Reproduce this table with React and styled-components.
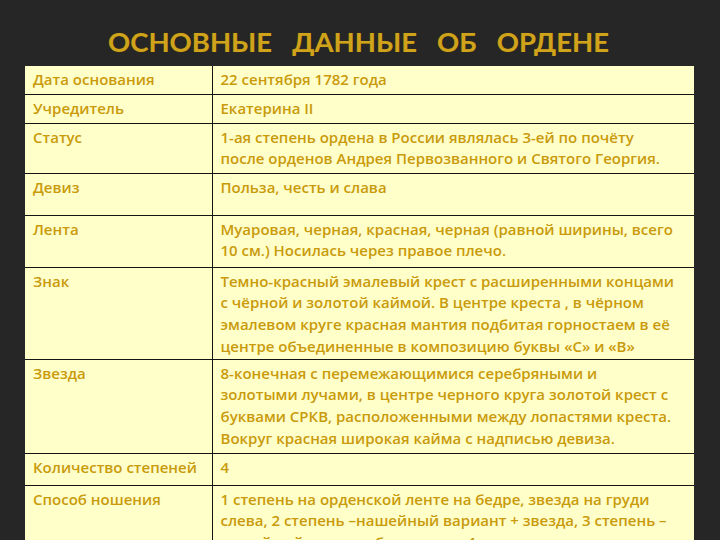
import React from "react";
import styled, { createGlobalStyle } from "styled-components";

const GlobalStyle = createGlobalStyle`
  html, body {
    margin: 0;
    padding: 0;
    background: #252525;
  }
`;

const Page = styled.div`
  width: 720px;
  height: 540px;
  overflow: hidden;
  background: #262626;
  font-family: "Open Sans", Lato, sans-serif;
`;

const Title = styled.h1`
  margin: 0;
  height: 66px;
  display: flex;
  align-items: flex-end;
  justify-content: center;
  padding: 0 3px 8px 0;
  box-sizing: border-box;
  font-family: Lato, "Open Sans", sans-serif;
  font-size: 27.5px;
  font-weight: 700;
  color: #d0a31c;
  white-space: pre;
  text-shadow: 0 0 1px #5a4500;
`;

const Table = styled.table`
  margin-left: 25px;
  width: 669px;
  border-collapse: collapse;
  table-layout: fixed;
  background: #ffffca;
`;

const Row = styled.tr`
  height: ${(p) => p.$h}px;
`;

const Cell = styled.td`
  width: ${(p) => (p.$label ? "187px" : "auto")};
  vertical-align: top;
  padding: 3px 4px 0 8px;
  font-size: 15px;
  font-weight: 600;
  line-height: 21.7px;
  white-space: pre-line;
  color: #c99a0a;
  border-right: ${(p) => (p.$label ? "1.5px solid #151515" : "none")};
  border-top: ${(p) => (p.$first ? "none" : "1.5px solid #151515")};
  box-sizing: border-box;
`;

// line breaks follow the source slide
const rows = [
  ["Дата основания", "22 сентября 1782 года", 28],
  ["Учредитель", "Екатерина II", 29],
  [
    "Статус",
    "1-ая степень ордена в России являлась 3-ей по почёту\nпосле орденов Андрея Первозванного и Святого Георгия.",
    50,
  ],
  ["Девиз", "Польза, честь и слава", 42],
  [
    "Лента",
    "Муаровая, черная, красная, черная (равной ширины, всего\n10 см.) Носилась через правое плечо.",
    52,
  ],
  [
    "Знак",
    "Темно-красный эмалевый крест с расширенными концами\nс чёрной и золотой каймой. В центре креста , в чёрном\nэмалевом круге красная мантия подбитая горностаем в её\nцентре объединенные в композицию буквы  «С» и «В»",
    92,
  ],
  [
    "Звезда",
    "8-конечная с перемежающимися серебряными и\nзолотыми лучами, в центре черного круга золотой крест с\nбуквами СРКВ, расположенными между лопастями креста.\nВокруг красная широкая кайма с надписью девиза.",
    94,
  ],
  ["Количество степеней", "4", 32],
  [
    "Способ ношения",
    "1 степень на орденской ленте на бедре, звезда на груди\nслева, 2 степень –нашейный вариант + звезда, 3 степень –\nнашейный вариант без звезды, 4 степень – в петлице",
    90,
  ],
];

const App = () => {
  return (
    <Page>
      <GlobalStyle />
      <Title>{"ОСНОВНЫЕ   ДАННЫЕ   ОБ   ОРДЕНЕ"}</Title>
      <Table>
        <tbody>
          {rows.map(([label, value, h], i) => (
            <Row key={label} $h={h}>
              <Cell $label $first={i === 0}>
                {label}
              </Cell>
              <Cell $first={i === 0}>{value}</Cell>
            </Row>
          ))}
        </tbody>
      </Table>
    </Page>
  );
};

export default App;
